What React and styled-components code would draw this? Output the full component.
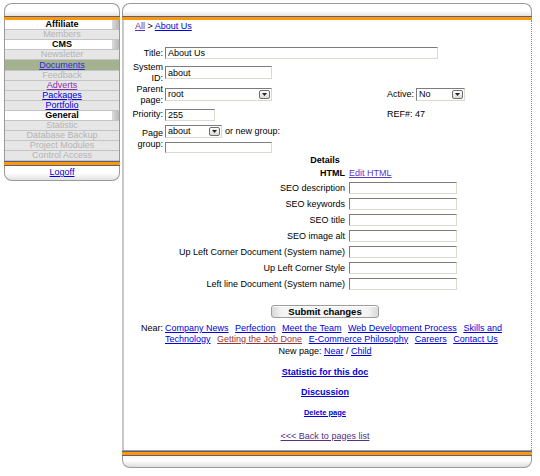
import React from 'react';
import styled, { createGlobalStyle, css } from 'styled-components';

const Global = createGlobalStyle`
  html, body { margin: 0; padding: 0; background: #fff; }
  body { font-family: "Liberation Sans", Arial, sans-serif; font-size: 9px; color: #000; }
  * { box-sizing: border-box; }
`;

const Page = styled.div`
  display: flex;
  align-items: flex-start;
  gap: 2px;
  padding: 3px 0 0 4px;
  width: 540px;
  height: 476px;
`;

/* ---------- shared bits ---------- */
const TopCap = styled.div`
  height: 13px;
  border: 1px solid #9a9a9a;
  border-bottom: none;
  border-radius: 8px 8px 0 0;
  background: linear-gradient(#ffffff 0%, #ffffff 55%, #e3e3e3 100%);
`;

const OrangeBar = styled.div`
  height: 4px;
  background: #ff9900;
  border-top: 1px solid #5d5d8c;
  ${(p) => p.$under && css`height: 5px; border-bottom: 1px solid #5d5d8c;`}
`;

const Link = styled.a`
  color: ${(p) => p.$c || '#0000dd'};
  text-decoration: underline;
  cursor: pointer;
  font-weight: ${(p) => (p.$bold ? 'bold' : 'normal')};
  white-space: ${(p) => (p.$nowrap ? 'nowrap' : 'normal')};
`;

/* ---------- side menu ---------- */
const Side = styled.nav`
  width: 116px;
  display: flex;
  flex-direction: column;
`;

const MenuList = styled.div`
  border-left: 1px solid #9a9a9a;
  border-right: 1px solid #9a9a9a;
  display: flex;
  flex-direction: column;
`;

const kinds = {
  head: css`
    background: linear-gradient(90deg, #ffffff calc(100% - 7px), #dadada calc(100% - 7px), #b8b8b8 100%);
    color: #000;
    font-weight: bold;
  `,
  off: css`
    background: #e6e6e6;
    color: #b4b4b4;
  `,
  link: css`
    background: #e6e6e6;
  `,
  current: css`
    height: 11px;
    line-height: 10px;
    background-color: #a5b290;
    background-image: radial-gradient(#c9d1bb 35%, transparent 40%);
    background-size: 2px 2px;
  `,
};

const MenuItem = styled.div`
  height: 10px;
  line-height: 9px;
  text-align: center;
  border-bottom: 1px solid #c4c4c4;
  white-space: nowrap;
  ${(p) => kinds[p.$kind]}
`;

const SideFoot = styled.div`
  height: 15px;
  border: 1px solid #9a9a9a;
  border-top: none;
  border-radius: 0 0 8px 8px;
  background: linear-gradient(#ffffff 0%, #ffffff 50%, #e2e2e2 100%);
  text-align: center;
  line-height: 12px;
`;

/* ---------- main panel ---------- */
const Main = styled.main`
  width: 410px;
  display: flex;
  flex-direction: column;
`;

const Body = styled.div`
  height: 430px;
  border-left: 2px solid #c8c8c8;
  border-right: 1px dotted #8a8a8a;
  padding: 1px 5px 0 0;
  display: flex;
  flex-direction: column;
`;

const GrayLine = styled.div`
  height: 1px;
  background: #9a9a9a;
`;

const MainFoot = styled.div`
  height: 12px;
  border: 1px solid #9a9a9a;
  border-top: none;
  border-radius: 0 0 8px 8px;
  background: linear-gradient(#f7f7f7 0%, #ffffff 40%, #dedede 100%);
`;

const Crumb = styled.div`
  padding-left: 11px;
  line-height: 11px;
`;

const Form = styled.div`
  margin-top: 12px;
  padding-left: 2px;
  display: grid;
  grid-template-columns: 37px 220px 27px auto;
  grid-template-rows: 18px 21px 23px 17px 31px;
  column-gap: 2px;
  align-items: center;
`;

const Label = styled.div`
  text-align: right;
  line-height: 11px;
  white-space: nowrap;
`;

const Plain = styled.div`
  line-height: 11px;
  white-space: nowrap;
  ${(p) => p.$span && css`grid-column: ${p.$span};`}
`;

const Field = styled.div`
  ${(p) => p.$span && css`grid-column: ${p.$span};`}
  display: flex;
  flex-direction: ${(p) => (p.$col ? 'column' : 'row')};
  align-items: ${(p) => (p.$col ? 'flex-start' : 'center')};
  gap: ${(p) => (p.$col ? '4px' : '3px')};
`;

const TextInput = styled.input`
  width: ${(p) => p.$w}px;
  height: ${(p) => p.$h || 12}px;
  padding: 0 2px;
  margin: 0;
  border: 1px solid;
  border-color: #7c7c7c #dcd9d0 #dcd9d0 #7c7c7c;
  background: #fff;
  font-family: "Liberation Sans", Arial, sans-serif;
  font-size: 9px;
  color: #000;
  outline: none;
`;

const SelectBox = styled.div`
  width: ${(p) => p.$w}px;
  height: 13px;
  border: 1px solid;
  border-color: #7c7c7c #dcd9d0 #dcd9d0 #7c7c7c;
  background: #fff;
  display: flex;
  align-items: center;
  justify-content: space-between;
  padding-left: 2px;
  line-height: 11px;
`;

const SelectBtn = styled.span`
  width: 11px;
  height: 9px;
  margin-right: 1px;
  border: 1px solid #6f6f6f;
  border-radius: 2px;
  background: linear-gradient(#ffffff, #d9d9d9);
  display: flex;
  align-items: center;
  justify-content: center;
`;

const Select = ({ w, value }) => (
  <SelectBox $w={w}>
    <span>{value}</span>
    <SelectBtn>
      <svg width="5" height="3" viewBox="0 0 5 3">
        <polygon points="0,0 5,0 2.5,3" fill="#222" />
      </svg>
    </SelectBtn>
  </SelectBox>
);

const Centered = styled.div`
  text-align: center;
  line-height: ${(p) => p.$lh || 10.5}px;
  margin-top: ${(p) => p.$mt || 0}px;
  font-weight: ${(p) => (p.$bold ? 'bold' : 'normal')};
  font-size: ${(p) => p.$fs || 9}px;
`;

const Details = styled.div`
  margin-left: 51px;
  display: grid;
  grid-template-columns: 170px 108px;
  grid-template-rows: 14px repeat(7, 16px);
  column-gap: 4px;
  align-items: center;
`;

const DLabel = styled.div`
  text-align: right;
  white-space: nowrap;
  line-height: 11px;
  font-weight: ${(p) => (p.$bold ? 'bold' : 'normal')};
`;

const SubmitButton = styled.button`
  align-self: center;
  margin-top: 13px;
  width: 108px;
  height: 13px;
  padding: 0;
  border: 1px solid #9c9c9c;
  border-radius: 3px;
  background: linear-gradient(90deg, #d8d8d8 0, #f4f4f4 10px, #f4f4f4 calc(100% - 10px), #d8d8d8 100%);
  box-shadow: inset 0 1px 0 #fff;
  font-family: "Liberation Sans", Arial, sans-serif;
  font-size: 9.5px;
  font-weight: bold;
  line-height: 11px;
  color: #000;
`;

const Near = styled.div`
  margin-top: 5px;
  display: flex;
  align-items: flex-start;
  gap: 2px;
  line-height: 10.5px;
`;

const NearLabel = styled.div`
  width: 39px;
  text-align: right;
`;

const NearLinks = styled.div`
  width: 346px;
  a { margin-right: 4px; }
`;

const menu = [
  { label: 'Affiliate', kind: 'head' },
  { label: 'Members', kind: 'off' },
  { label: 'CMS', kind: 'head' },
  { label: 'Newsletter', kind: 'off' },
  { label: 'Documents', kind: 'current', link: '#2b2bd6' },
  { label: 'Feedback', kind: 'off' },
  { label: 'Adverts', kind: 'link', link: '#8a2fb0' },
  { label: 'Packages', kind: 'link', link: '#0000dd' },
  { label: 'Portfolio', kind: 'link', link: '#0000dd' },
  { label: 'General', kind: 'head' },
  { label: 'Statistic', kind: 'off' },
  { label: 'Database Backup', kind: 'off' },
  { label: 'Project Modules', kind: 'off' },
  { label: 'Control Access', kind: 'off' },
];

const detailRows = [
  'SEO description',
  'SEO keywords',
  'SEO title',
  'SEO image alt',
  'Up Left Corner Document (System name)',
  'Up Left Corner Style',
  'Left line Document (System name)',
];

const nearLinks = [
  { t: 'Company News' },
  { t: 'Perfection' },
  { t: 'Meet the Team' },
  { t: 'Web Development Process' },
  { t: 'Skills and' },
  { t: 'Technology' },
  { t: 'Getting the Job Done', c: '#973535' },
  { t: 'E-Commerce Philosophy' },
  { t: 'Careers' },
  { t: 'Contact Us' },
];

export default function App() {
  return (
    <>
      <Global />
      <Page>
        <Side>
          <TopCap />
          <OrangeBar />
          <MenuList>
            {menu.map((m) => (
              <MenuItem key={m.label} $kind={m.kind}>
                {m.link ? <Link $c={m.link}>{m.label}</Link> : m.label}
              </MenuItem>
            ))}
          </MenuList>
          <OrangeBar $under />
          <SideFoot>
            <Link>Logoff</Link>
          </SideFoot>
        </Side>

        <Main>
          <TopCap />
          <OrangeBar />
          <Body>
            <Crumb>
              <Link $c="#6a2a9a">All</Link> &gt; <Link>About Us</Link>
            </Crumb>

            <Form>
              <Label>Title:</Label>
              <Field $span="2 / 5">
                <TextInput $w={273} defaultValue="About Us" readOnly />
              </Field>

              <Label>System<br />ID:</Label>
              <Field>
                <TextInput $w={107} $h={13} defaultValue="about" readOnly />
              </Field>
              <div />
              <div />

              <Label>Parent<br />page:</Label>
              <Field>
                <Select w={107} value="root" />
              </Field>
              <Label>Active:</Label>
              <Field>
                <Select w={49} value="No" />
              </Field>

              <Label>Priority:</Label>
              <Field>
                <TextInput $w={50} defaultValue="255" readOnly />
              </Field>
              <Plain $span="3 / 5">REF#: 47</Plain>

              <Label>Page<br />group:</Label>
              <Field $col>
                <Field>
                  <Select w={57} value="about" />
                  <span>or new group:</span>
                </Field>
                <TextInput $w={107} $h={11} readOnly />
              </Field>
            </Form>

            <Centered $bold $lh={11} $mt={1}>Details</Centered>
            <Details>
              <DLabel $bold>HTML</DLabel>
              <div>
                <Link $c="#5a36c8">Edit HTML</Link>
              </div>
              {detailRows.map((r) => (
                <React.Fragment key={r}>
                  <DLabel>{r}</DLabel>
                  <TextInput $w={108} readOnly />
                </React.Fragment>
              ))}
            </Details>

            <SubmitButton type="button">Submit changes</SubmitButton>

            <Near>
              <NearLabel>Near:</NearLabel>
              <NearLinks>
                {nearLinks.map((l) => (
                  <React.Fragment key={l.t}>
                    <Link $c={l.c} $nowrap>{l.t}</Link>{' '}
                  </React.Fragment>
                ))}
              </NearLinks>
            </Near>

            <Centered $mt={2}>
              New page: <Link>Near</Link> / <Link>Child</Link>
            </Centered>
            <Centered $mt={10} $bold>
              <Link $bold>Statistic for this doc</Link>
            </Centered>
            <Centered $mt={10} $bold>
              <Link $bold>Discussion</Link>
            </Centered>
            <Centered $mt={10} $lh={9} $fs={7.5}>
              <Link $bold>Delete page</Link>
            </Centered>
            <Centered $mt={14}>
              <Link $c="#58307c">&lt;&lt;&lt; Back to pages list</Link>
            </Centered>
          </Body>
          <GrayLine />
          <OrangeBar $under />
          <MainFoot />
        </Main>
      </Page>
    </>
  );
}
